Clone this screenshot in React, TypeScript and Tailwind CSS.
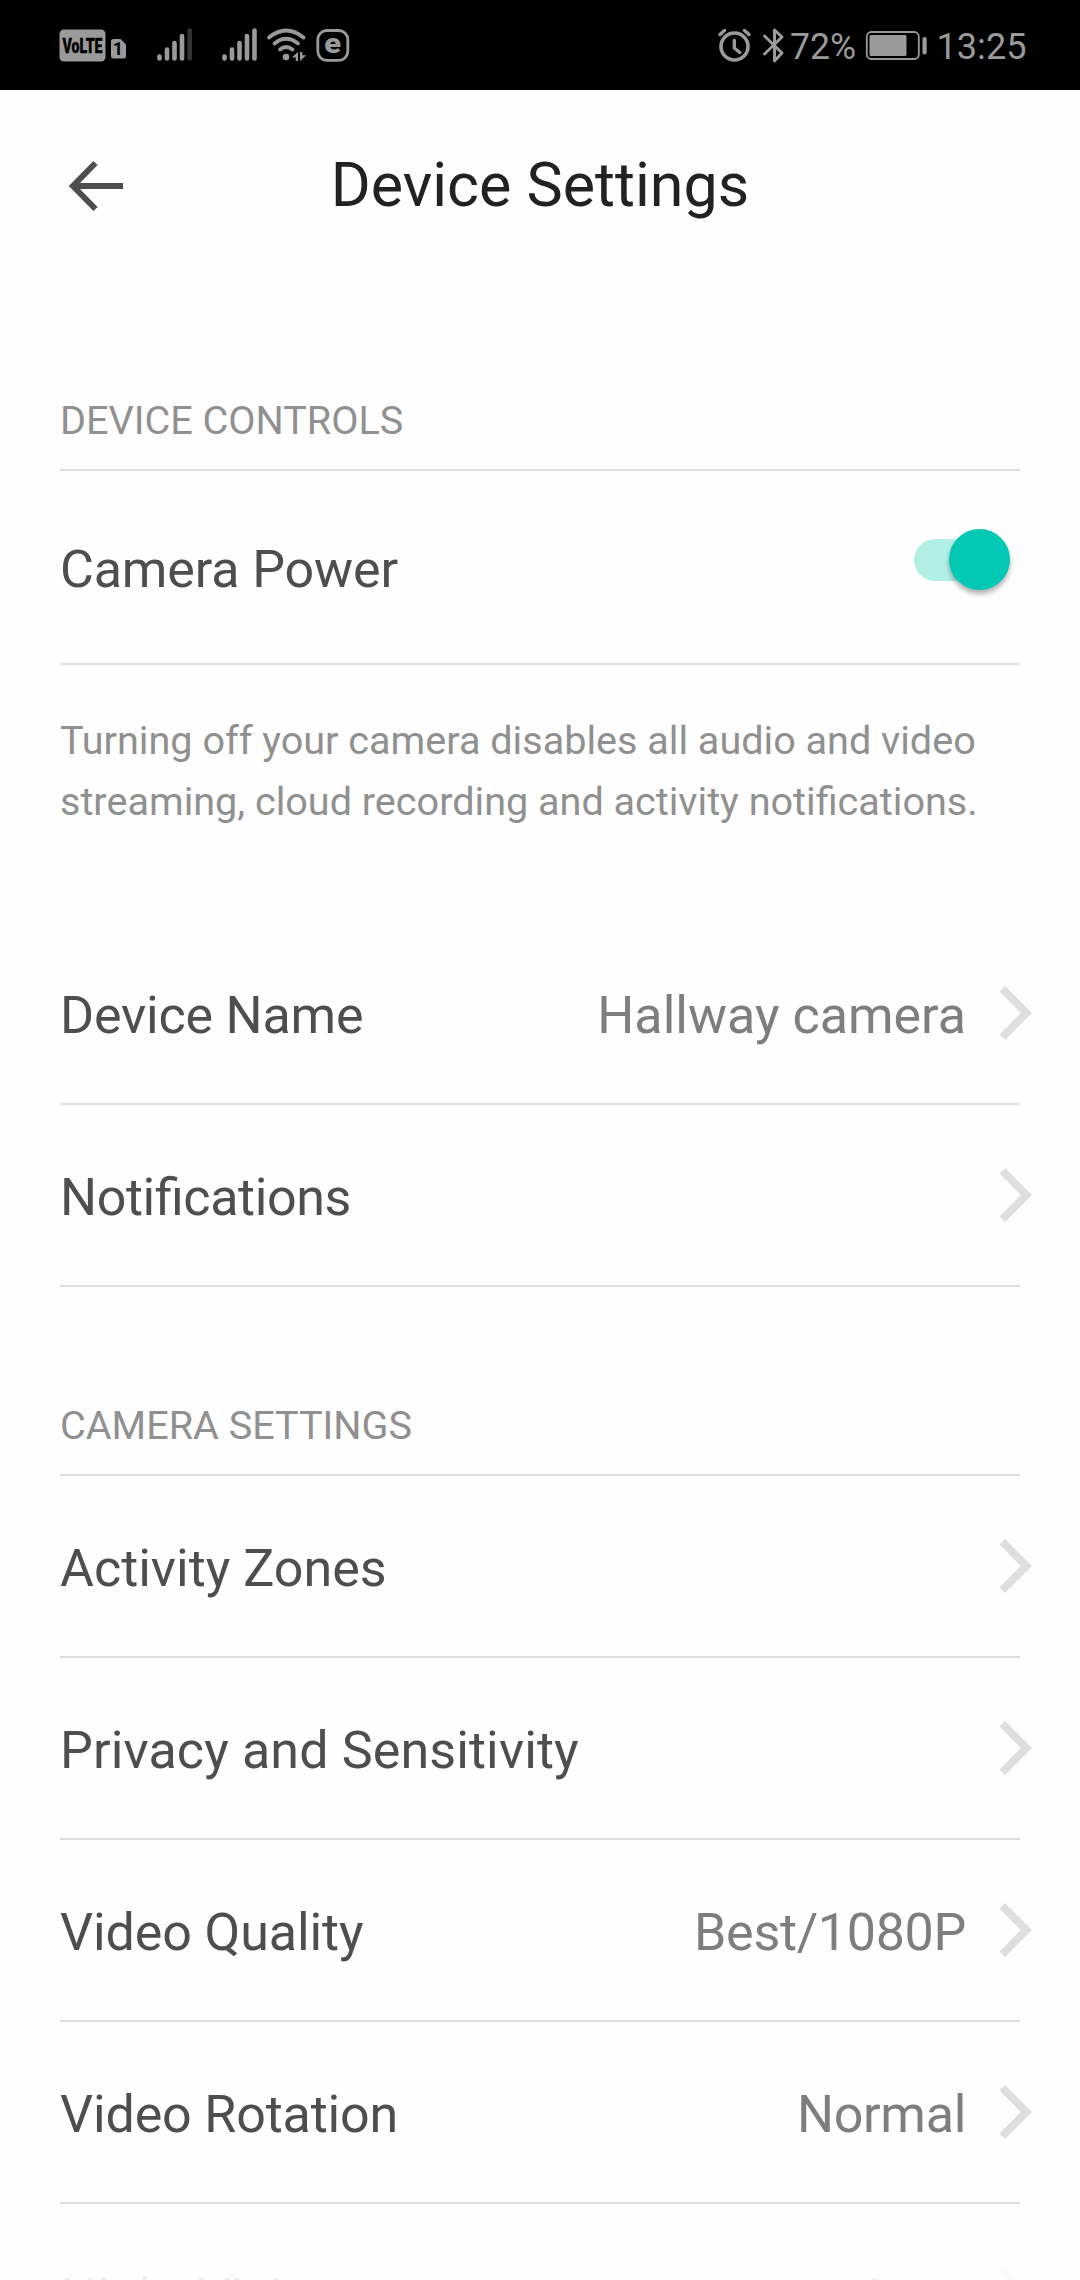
import React from "react";

const G = "#9a9a9a";

function Chevron() {
  return (
    <svg className="mb-px ml-[33px] -mr-[12px] shrink-0" width="33" height="54" viewBox="0 0 33 54">
      <path d="M3.300 2.800 27.300 27 3.300 51.200" fill="none" stroke="#dedede" strokeWidth="8" />
    </svg>
  );
}

type RowProps = { label: string; value?: string; labelClass?: string; valueClass?: string };

function Row({ label, value, labelClass = "", valueClass = "" }: RowProps) {
  return (
    <div className="flex h-[182px] shrink-0 items-center border-b-2 border-[#dedede]">
      <span className={`flex-1 pt-[6px] text-[52px] leading-[60px] text-[#4e4e4e] ${labelClass}`}>{label}</span>
      {value && <span className={`pt-[6px] text-[52px] leading-[60px] text-[#7e7e7e] ${valueClass}`}>{value}</span>}
      <Chevron />
    </div>
  );
}

function Section({ title }: { title: string }) {
  return (
    <div className="flex h-[189px] shrink-0 items-end border-b-2 border-[#dedede] pb-[24px]">
      <h2 className="text-[39.6px] leading-[48px] text-[#909090]">{title}</h2>
    </div>
  );
}

function StatusBar() {
  return (
    <div className="flex h-[90px] shrink-0 bg-black">
      <svg width="1080" height="90" viewBox="0 0 1080 90" fill={G}>
        <rect x="59.500" y="29.500" width="46" height="32" rx="4.500" />
        <text x="62.500" y="52.500" fontFamily="Roboto" fontWeight="900" fontSize="20.500" textLength="40" lengthAdjust="spacingAndGlyphs" fill="#000" stroke="#000" strokeWidth="0.4">VoLTE</text>
        <path d="M113.500 39h7l5.500 5.500v11.500a2.500 2.500 0 0 1-2.500 2.500h-10a2.500 2.500 0 0 1-2.500-2.500v-14.500a2.500 2.500 0 0 1 2.500-2.500z" />
        <text x="112.700" y="55" fontFamily="Roboto" fontWeight="700" fontSize="18" fill="#000">1</text>
        <g stroke={G} strokeWidth="4.600" strokeLinecap="round">
          <path d="M159.500 56.500v2M167 49.500v9M174.500 43v15.500M182 36v22.500" />
          <path d="M189.700 30.500v28" stroke="#333" />
          <path d="M224.500 56.500v2M232 49.500v9M239.500 43v15.500M247 36v22.500M254.500 30.500v28" />
        </g>
        <g fill="none" stroke={G} strokeWidth="3.700" strokeLinecap="round">
          <path d="M269 37.500Q286 23.500 303.500 37.500M274.500 43.500Q286 34 298 43.500M280 49.500Q286 44.500 292.500 49.500" />
        </g>
        <circle cx="286" cy="57" r="3.300" />
        <path d="M298 52v9h-2.200v-3.500h-4zM300 52h2.300v3.200h4L300 61z" />
        <rect x="317.800" y="30.500" width="30" height="29.800" rx="9" fill="none" stroke={G} strokeWidth="2.800" />
        <text x="324.300" y="53" fontFamily="Roboto" fontWeight="900" fontSize="28" textLength="16.800" lengthAdjust="spacingAndGlyphs">e</text>
        <g fill="none" stroke={G} strokeWidth="3.400" strokeLinecap="round" strokeLinejoin="round">
          <circle cx="734.500" cy="46.500" r="13.500" strokeWidth="3.600" />
          <path d="M734.300 40.500v7.500l5.500 4.500M720 34.500l4.500-4M749 34.500l-4.500-4" />
          <path strokeWidth="3" d="M764.500 36l17.500 17-7.500 8V30l7.500 7-17.500 17" />
        </g>
        <text x="790" y="59" fontFamily="Roboto" fontSize="37" textLength="66" lengthAdjust="spacingAndGlyphs">72%</text>
        <rect x="866.800" y="32" width="52" height="27" rx="4.500" fill="none" stroke={G} strokeWidth="1.800" />
        <rect x="869.500" y="35" width="37" height="21" rx="1.500" />
        <rect x="922.500" y="37" width="4.200" height="17.500" rx="2.100" />
        <text x="936.500" y="59" fontFamily="Roboto" fontSize="37" textLength="90" lengthAdjust="spacingAndGlyphs">13:25</text>
      </svg>
    </div>
  );
}

export default function App() {
  return (
    <div className="relative flex h-[2280px] w-[1080px] flex-col overflow-hidden bg-[#fefefe] font-['Roboto',sans-serif]">
      <StatusBar />
      <header className="grid h-[192px] shrink-0 grid-cols-[120px_1fr_120px] items-center">
        <svg className="ml-[68px]" width="56" height="52" viewBox="0 0 56 52">
          <path d="M27.500 3 5 26l22.500 23M5 26h50" fill="none" stroke="#4e4e4e" strokeWidth="6" />
        </svg>
        <h1 className="pb-[2px] text-center text-[61px] leading-[72px] text-[#222]">Device Settings</h1>
      </header>
      <main className="flex flex-col px-[60px]">
        <Section title="DEVICE CONTROLS" />
        <div className="flex h-[194px] shrink-0 items-center border-b-2 border-[#dedede]">
          <span className="flex-1 pt-[5px] text-[52px] leading-[60px] tracking-[-0.13px] text-[#4e4e4e]">Camera Power</span>
          <div className="mr-[10px] mb-[15px] flex h-[42px] w-[96px] items-center justify-end rounded-full bg-[#b2f0e7]">
            <div className="size-[61px] shrink-0 rounded-full bg-[#03c9b4] shadow-[0_4px_5px_rgba(0,0,0,0.3)]" />
          </div>
        </div>
        <p className="pt-[45px] text-[39.6px] leading-[61px] whitespace-nowrap text-[#909090]">
          Turning off your camera disables all audio and video
          <br />
          streaming, cloud recording and activity notifications.
        </p>
        <div className="mt-[91px]">
          <Row label="Device Name" labelClass="tracking-[-0.2px]" value="Hallway camera" />
          <Row label="Notifications" labelClass="tracking-[-0.38px] [font-feature-settings:'liga']" />
        </div>
        <Section title="CAMERA SETTINGS" />
        <Row label="Activity Zones" />
        <Row label="Privacy and Sensitivity" labelClass="tracking-[0.13px]" />
        <Row label="Video Quality" labelClass="tracking-[-0.1px]" value="Best/1080P" valueClass="tracking-[-0.3px]" />
        <Row label="Video Rotation" labelClass="tracking-[-0.15px]" value="Normal" valueClass="tracking-[-0.3px]" />
        <div className="opacity-[0.07]">
          <Row label="Night Vision" value="Auto" labelClass="pt-[8px]" valueClass="pt-[8px]" />
        </div>
      </main>
    </div>
  );
}
